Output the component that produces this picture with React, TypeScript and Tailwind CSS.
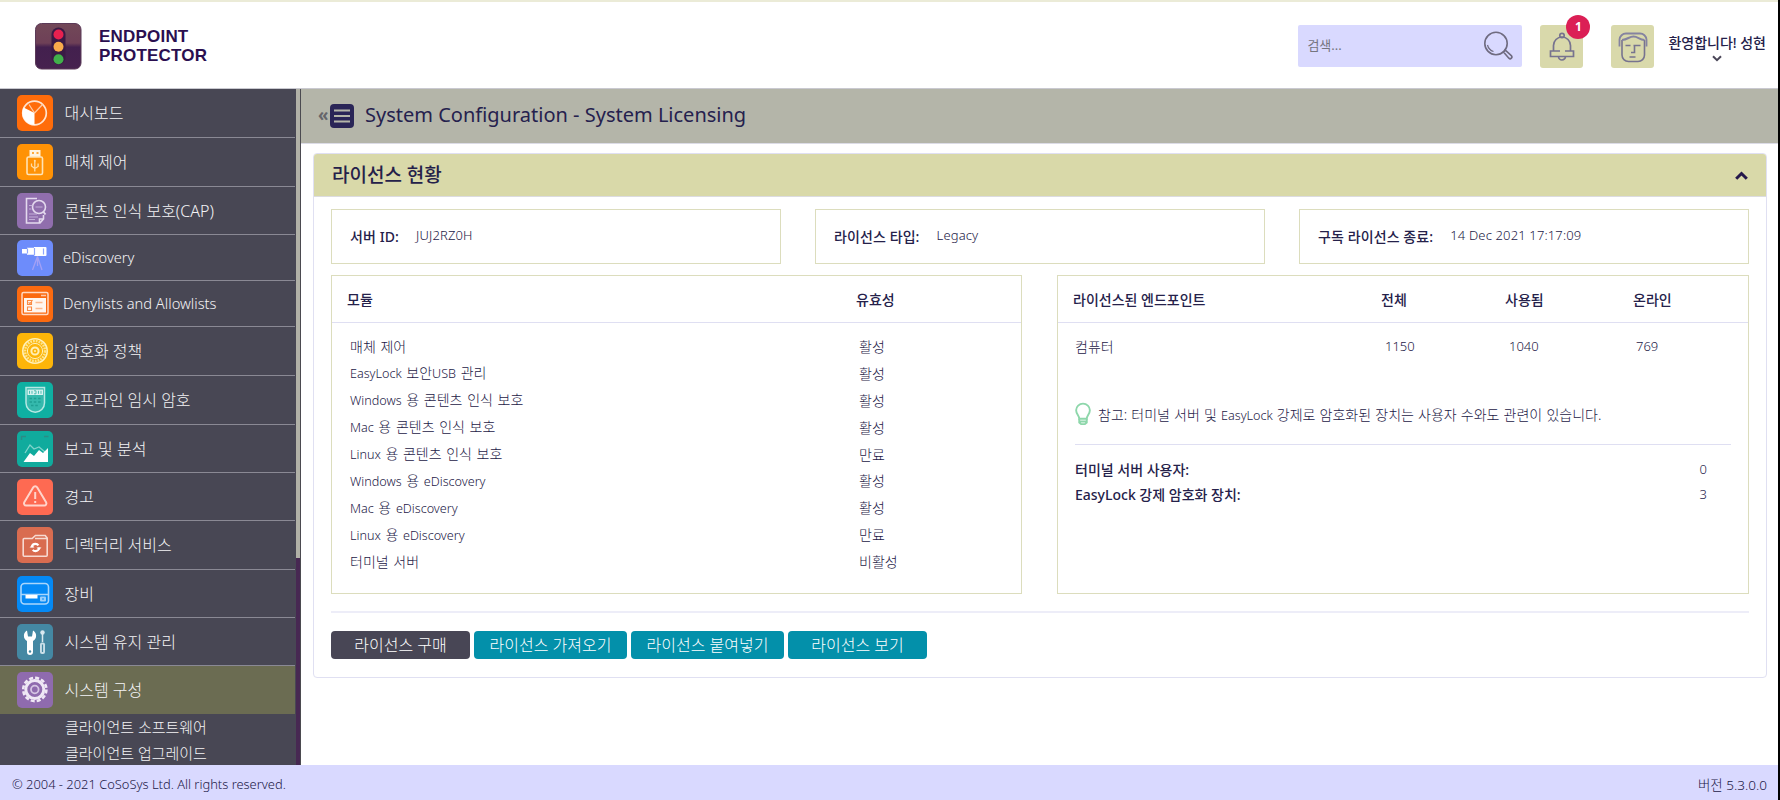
import { type ReactNode } from "react";

type Item = { label: string; h: string; tile: string; text?: string; active?: boolean; icon: ReactNode };

const items: Item[] = [
  {
    label: "대시보드", h: "h-[49px]", tile: "bg-[#ff6c0a]",
    icon: (
      <>
        <circle cx="17.5" cy="18" r="11.8" stroke="#ffe3cf" strokeWidth="1.7" />
        <path d="M17.5 18 12 9.5M17.5 18l8-8.500" stroke="#ffc9a3" strokeWidth="1.3" />
        <path d="M17.500 18v12A12 12 0 0 1 6.600 12.600z" fill="#fff" />
      </>
    ),
  },
  {
    label: "매체 제어", h: "h-[49px]", tile: "bg-[#ff9205]",
    icon: (
      <>
        <path d="M12.500 6h11v7h-11z" fill="#fff3e0" />
        <path d="M15 9h2M19.500 9h2" stroke="#ff9205" strokeWidth="1.6" />
        <rect x="10" y="13" width="15.5" height="17.5" rx="1.5" stroke="#ffe3b5" strokeWidth="1.6" />
        <path d="M17.800 27.500v-11M14.500 19.500v2.500l3.300 2.500 3.300-2v-3" stroke="#ffdca6" strokeWidth="1.3" />
        <circle cx="17.8" cy="16.8" r="1" fill="#ffdca6" />
      </>
    ),
  },
  {
    label: "콘텐츠 인식 보호(CAP)", h: "h-[48px]", tile: "bg-[#906ead]",
    icon: (
      <>
        <path d="M20 5.500H9.500V30h13.500l3.500-4v-4M22.500 30v-4h4" stroke="#e4d9ee" strokeWidth="1.6" />
        <circle cx="22" cy="14" r="6.5" stroke="#e4d9ee" strokeWidth="1.6" />
        <path d="m26.500 19 2 2.500" stroke="#e4d9ee" strokeWidth="2" />
        <path d="M12 12.500h3.500M18.500 14h7M12 16h2.500M12 21h8M12 24h9M12 26.500h6" stroke="#c3aed9" strokeWidth="1.2" />
      </>
    ),
  },
  {
    label: "eDiscovery", h: "h-[46px]", tile: "bg-[#6d8cfb]", text: "pl-[10px] text-[14.6px]",
    icon: (
      <>
        <path d="M5 9h5V7.800h7V7h11.500a1 1 0 0 1 1 1v7a1 1 0 0 1-1 1H17v-1.200h-7V13.500H5z" fill="#fff" />
        <path d="M10.500 8.500v5M17.500 8v7.500M26.500 8.500v6" stroke="#8ea6fc" strokeWidth="1.2" />
        <path d="m20.500 16.500-5 13.500M20.500 16.500l4.500 13.500M20.500 17v9" stroke="#a3a0f5" strokeWidth="1.3" />
      </>
    ),
  },
  {
    label: "Denylists and Allowlists", h: "h-[46px]", tile: "bg-[#fb6a10]", text: "pl-[10px] text-[14.7px]",
    icon: (
      <>
        <rect x="5" y="6.5" width="26" height="22" rx="1.5" stroke="#ffd9c2" strokeWidth="1.5" />
        <path d="M24 9.500h5" stroke="#ffc7a6" strokeWidth="1.3" />
        <path d="M7 12h22v14.500H7z" fill="#fff6ef" />
        <path d="M10.500 14.500h4v4h-4zM10.500 21h4v3.500h-4zM11.500 16.500l1.500 1 2.500-3.500" stroke="#fb8a44" strokeWidth="1.1" />
        <path d="M18.500 16.500h7M18.500 22.500h7" stroke="#fdb98f" strokeWidth="1.5" />
      </>
    ),
  },
  {
    label: "암호화 정책", h: "h-[49px]", tile: "bg-[#fdb509]",
    icon: (
      <>
        <circle cx="18" cy="18" r="12.2" stroke="#fff0b8" strokeWidth="1.6" />
        <circle cx="18" cy="18" r="10" stroke="#ffe489" strokeWidth="2.6" strokeDasharray="1.8 1" />
        <circle cx="18" cy="18" r="7.6" stroke="#ffefb5" strokeWidth="1" />
        <circle cx="18" cy="18" r="3.6" stroke="#fff0b8" strokeWidth="2" />
        <circle cx="18" cy="18" r="1" fill="#fff0b8" />
      </>
    ),
  },
  {
    label: "오프라인 임시 암호", h: "h-[49px]", tile: "bg-[#0fb0a2]",
    icon: (
      <>
        <path d="M9 5.500h18.500v15.500a9.250 9.250 0 0 1-18.500 0z" fill="#35b9ad" stroke="#b5e8e3" strokeWidth="1.5" />
        <path d="M10.500 7.500h15.500v5.500H10.500z" fill="#d5f3f0" />
        <path d="M12.500 8.800v3M15 8.800v3M17 8.800h2v3h-2M21.500 8.800v3M24 8.800v3" stroke="#4fbdb3" strokeWidth="1" />
        <path d="M12.500 16.500h11.500M12.500 20h11.500M14 23.500h8.500" stroke="#1f9f93" strokeWidth="1.4" strokeDasharray="2.5 1.8" />
      </>
    ),
  },
  {
    label: "보고 및 분석", h: "h-[48px]", tile: "bg-[#10ab9d]",
    icon: (
      <>
        <path d="m8 22 5-8 4 4 5-2 6 5" stroke="#7fd4cb" strokeWidth="1.3" />
        <path d="m6.500 31 6.500-9 4 3 5-6 4 3 5-5v14z" fill="#fff" />
        <path d="M4.500 9V5.500H9M27 5.500h4.500" stroke="#2a8c86" strokeWidth="1.4" />
      </>
    ),
  },
  {
    label: "경고", h: "h-[48px]", tile: "bg-[#fe6a52]",
    icon: (
      <>
        <path d="M16.300 8.300a2.200 2.200 0 0 1 3.800 0l9 15a2.100 2.100 0 0 1-1.900 3.200h-18a2.100 2.100 0 0 1-1.900-3.200z" stroke="#ffd4cb" strokeWidth="2" />
        <path d="M18.200 13v7M18.200 22v2" stroke="#ffd4cb" strokeWidth="2" />
      </>
    ),
  },
  {
    label: "디렉터리 서비스", h: "h-[49px]", tile: "bg-[#d96c50]",
    icon: (
      <>
        <path d="M6.200 12.500a1 1 0 0 1 1-1h8l3.200-3h9.800l2 2.500v17.200a1 1 0 0 1-1 1h-22a1 1 0 0 1-1-1zM18 11.500h12" stroke="#f7dad2" strokeWidth="1.6" />
        <circle cx="18.5" cy="20.5" r="3.6" stroke="#fff" strokeWidth="2.2" strokeDasharray="8.5 2.8" />
        <path d="m12.500 20.500 2.500-2.500 2.500 2.500zM19.500 20.500h5l-2.500 2.500z" fill="#fff" />
      </>
    ),
  },
  {
    label: "장비", h: "h-[48px]", tile: "bg-[#0489f5]",
    icon: (
      <>
        <rect x="4" y="7.5" width="27.5" height="20.5" rx="3.5" stroke="#a9d6fc" strokeWidth="1.6" />
        <path d="M4 18.500h27.500" stroke="#a9d6fc" strokeWidth="1.3" />
        <path d="M8.500 19h12v3.500h-12z" fill="#fff" />
        <rect x="23" y="20.5" width="6" height="5" rx="1" fill="#9bcffb" />
        <path d="M25 23h2" stroke="#0489f5" strokeWidth="1.2" />
      </>
    ),
  },
  {
    label: "시스템 유지 관리", h: "h-[48px]", tile: "bg-[#4488a3]",
    icon: (
      <>
        <path d="M10 6.500 11 12.500h4l1-6a6 6 0 0 1 0 10.500v11a3 3 0 0 1-6 0V17a6 6 0 0 1 0-10.500z" fill="#fff" />
        <circle cx="13" cy="27.5" r="1.2" fill="#4488a3" />
        <path d="M25.500 7v11" stroke="#d9e9f0" strokeWidth="1.5" />
        <circle cx="25.5" cy="8.5" r="2.2" fill="#d9e9f0" />
        <rect x="23" y="18.5" width="5" height="11.5" rx="2" fill="#c9dfe8" />
        <path d="M25.500 20.500v7.500" stroke="#4488a3" strokeWidth="1.2" />
      </>
    ),
  },
  {
    label: "시스템 구성", h: "h-[48px]", tile: "bg-[#8f6bae]", active: true,
    icon: (
      <>
        <circle cx="17.8" cy="17.5" r="9" stroke="#efe8f5" strokeWidth="3" />
        <circle cx="17.8" cy="17.5" r="11.6" stroke="#efe8f5" strokeWidth="2.6" strokeDasharray="4 2.07" />
        <circle cx="17.8" cy="17.5" r="3.8" stroke="#d5c5e3" strokeWidth="1.8" />
      </>
    ),
  },
];

const modules = [
  ["매체 제어", "활성"],
  ["EasyLock 보안USB 관리", "활성"],
  ["Windows 용 콘텐츠 인식 보호", "활성"],
  ["Mac 용 콘텐츠 인식 보호", "활성"],
  ["Linux 용 콘텐츠 인식 보호", "만료"],
  ["Windows 용 eDiscovery", "활성"],
  ["Mac 용 eDiscovery", "활성"],
  ["Linux 용 eDiscovery", "만료"],
  ["터미널 서버", "비활성"],
];

/* Sets Latin words slightly smaller than the Hangul around them. */
function Mixed({ children }: { children: string }) {
  return (
    <span className="whitespace-pre">
      {children.split(/([A-Za-z]+)/).map((part, i) =>
        i % 2 ? <span key={i} className="text-[12.6px]">{part}</span> : part,
      )}
    </span>
  );
}

function Header() {
  return (
    <header className="flex h-[89px] shrink-0 items-start border-t-2 border-b border-t-[#ebebd7] border-b-[#c9c9d0] bg-white">
      <svg className="mt-[21px] ml-[35px] size-[47px]" viewBox="0 0 47 47" fill="none">
        <defs>
          <linearGradient id="logo" x1="0" y1="0" x2="0" y2="1">
            <stop offset="0" stopColor="#724858" />
            <stop offset=".43" stopColor="#6e4057" />
            <stop offset=".52" stopColor="#43204e" />
            <stop offset="1" stopColor="#46224f" />
          </linearGradient>
        </defs>
        <rect x=".5" y=".5" width="45.5" height="45.5" rx="6" fill="url(#logo)" stroke="#5b3a58" />
        <rect x="16.5" y="4.5" width="14" height="37" rx="7" fill="#3a1a45" />
        <circle cx="23.5" cy="11.5" r="5" fill="#e8214f" />
        <circle cx="23.5" cy="23.7" r="5" fill="#f9ab4b" />
        <circle cx="23.5" cy="36.3" r="5" fill="#41b04b" />
      </svg>
      <div className="mt-[25px] ml-[17px] font-['Liberation_Sans',sans-serif] text-[17px] leading-[19px] font-bold tracking-[0.2px] text-[#2b0f50]">
        <div>ENDPOINT</div>
        <div>PROTECTOR</div>
      </div>
      <div className="ml-auto flex items-start pt-[23px] pr-[12px]">
        <div className="flex h-[42px] w-[224px] items-center justify-between rounded-[2px] bg-[#d9d9ff] pr-[9px] pl-[9px]">
          <span className="text-[13px] text-[#75757f]">검색...</span>
          <svg className="size-[30px]" viewBox="0 0 30 30" fill="none" stroke="#6f6b80" strokeWidth="1.6">
            <circle cx="13" cy="12.5" r="11.2" />
            <path d="M4.500 14a9 9 0 0 0 6 6.500" strokeWidth="1.2" />
            <path d="m20.500 21 1.800-1.800 6 5.500a1.700 1.700 0 0 1-2.400 2.500z" />
          </svg>
        </div>
        <div className="relative ml-[18px] flex size-[43px] items-center justify-center rounded-[3px] bg-[#d9d9ab]">
          <svg className="size-[30px]" viewBox="0 0 30 30" fill="none" stroke="#77738f" strokeWidth="1.7">
            <circle cx="15" cy="3.5" r="2.2" />
            <path d="M6.500 19V13.500a8.500 8.500 0 0 1 17 0V19" />
            <path d="M13 19H3.500v5.500h23V19H18M11.500 24.500a3.500 3.500 0 0 0 7 0" />
          </svg>
          <span className="absolute -top-[10px] -right-[7px] flex size-[24px] items-center justify-center rounded-full bg-[#db1f55] text-[12px] font-bold text-white">1</span>
        </div>
        <div className="ml-[28px] flex size-[43px] items-center justify-center rounded-[3px] bg-[#d9d9ab]">
          <svg className="size-[32px]" viewBox="0 0 32 32" fill="none" stroke="#77738f" strokeWidth="1.6">
            <path d="M5 9v15a6.500 6.500 0 0 0 6.500 6.500h9.500a6.500 6.500 0 0 0 6.500-6.500V9" />
            <path d="M2.500 15.500V8.500a6.500 6.500 0 0 1 6.500-6h14a6.500 6.500 0 0 1 6.500 6v7" stroke="#8583a0" strokeWidth="1.8" />
            <path d="M5 9c6-.5 7-3.500 11.500-3.500S22 8.500 27.500 9" stroke="#8583a0" strokeWidth="2" />
            <path d="M8.500 14.500h5M16.500 14.500h7M17.500 14.500v7H14M12.500 26h6" />
          </svg>
        </div>
        <div className="ml-[14px] flex flex-col items-center">
          <span className="mt-[8px] text-[14px] leading-[20px] font-medium whitespace-nowrap text-[#25214a]">환영합니다! 성현</span>
          <svg className="mt-[2px] h-[7px] w-[10px]" viewBox="0 0 10 7" fill="none" stroke="#4a4658" strokeWidth="2"><path d="m1 1.200 4 4 4-4" /></svg>
        </div>
      </div>
    </header>
  );
}

function Sidebar() {
  return (
    <nav className="flex w-[301px] shrink-0 overflow-hidden border-r border-[#4b4a50] bg-[#484754] font-light">
      <div className="w-[295px] shrink-0">
        {items.map((it) => (
          <div key={it.label} className={`flex items-center pl-[17px] text-[16px] text-[#f4f4f6] ${it.h} ${it.active ? "bg-[#6b6c52]" : "border-b border-[#8a8994]"}`}>
            <svg className={`size-[36px] rounded-[5px] ${it.tile}`} viewBox="0 0 36 36" fill="none">{it.icon}</svg>
            <span className={it.text ?? "pl-[11.500px]"}>{it.label}</span>
          </div>
        ))}
        <div className="pl-[65px] text-[15px] leading-[26px] text-[#f4f4f6]">
          <div>클라이언트 소프트웨어</div>
          <div>클라이언트 업그레이드</div>
        </div>
      </div>
      <div className="flex-1 border-l border-[#484754] bg-[#472852]">
        <div className="h-[469px] bg-[#b1b1a7]" />
      </div>
    </nav>
  );
}

function Info({ label, value }: { label: string; value: string }) {
  return (
    <div className="flex h-[55px] w-[450px] items-center border border-[#dcddbd] pb-px pl-[18px] text-[14px] whitespace-nowrap">
      <span className="font-medium tracking-[0.1px]">{label}</span>
      <span className="ml-[17px] text-[13px] font-light tracking-[0.15px] text-[#1c1846]">{value}</span>
    </div>
  );
}

function Button({ children, cls }: { children: string; cls: string }) {
  return <button className={`flex h-[28px] items-center justify-center rounded-[4px] text-[16px] font-light text-white ${cls}`}>{children}</button>;
}

export default function App() {
  return (
    <div className="flex h-[800px] w-[1780px] flex-col overflow-hidden border-r-2 border-black bg-white font-['Noto_Sans','Noto_Sans_CJK_KR',sans-serif] text-[#25214a]">
      <Header />
      <div className="flex h-[676px] shrink-0">
        <Sidebar />
        <main className="min-w-0 flex-1">
          <div className="flex h-[55px] items-center border-b border-[#dcdce6] bg-[#b4b5a9] pl-[17px]">
            <span className="w-[12px] pb-[3px] text-[17px] leading-none font-bold text-[#66656a]">«</span>
            <svg className="size-[24px]" viewBox="0 0 24 24">
              <rect width="24" height="24" rx="4" fill="#2a2557" />
              <path d="M4 6.500h16M4 12h16M4 17.500h16" stroke="#b4b5a9" strokeWidth="2" />
            </svg>
            <h1 className="ml-[11px] pb-[2px] text-[20px] text-[#25214e]">System Configuration - System Licensing</h1>
          </div>
          <section className="mt-[9px] ml-[12px] h-[525px] w-[1454px] rounded-[4px] border border-[#e0e0f2]">
            <div className="flex h-[43px] items-center justify-between rounded-t-[3px] border-b border-[#dcdce0] bg-[#d9d9a9] pr-[18px] pl-[18px]">
              <h2 className="text-[19px] font-medium">라이선스 현황</h2>
              <svg className="h-[9px] w-[13px]" viewBox="0 0 13 9" fill="none" stroke="#25184a" strokeWidth="3"><path d="M1.200 7.800 6.500 2.500l5.300 5.300" /></svg>
            </div>
            <div className="mx-[17px] mt-[12px] flex justify-between">
              <Info label="서버 ID:" value="JUJ2RZ0H" />
              <Info label="라이선스 타입:" value="Legacy" />
              <Info label="구독 라이선스 종료:" value="14 Dec 2021 17:17:09" />
            </div>
            <div className="mx-[17px] mt-[11px] flex justify-between text-[14px]">
              <div className="h-[319px] w-[691px] border border-[#dcddbd]">
                <div className="flex h-[47px] items-center border-b border-[#dfdff2] pl-[15px] font-medium">
                  <span className="w-[509px]">모듈</span>
                  <span>유효성</span>
                </div>
                <div className="pt-[10px] pl-[18px] font-light text-[#1c1846] [word-spacing:1px]">
                  {modules.map(([name, state]) => (
                    <div key={name} className="flex h-[26.9px] items-center">
                      <span className="w-[509px]"><Mixed>{name}</Mixed></span>
                      <span>{state}</span>
                    </div>
                  ))}
                </div>
              </div>
              <div className="h-[319px] w-[692px] border border-[#dcddbd]">
                <div className="flex h-[47px] items-center border-b border-[#dfdff2] pl-[15px] font-medium">
                  <span className="w-[308px]">라이선스된 엔드포인트</span>
                  <span className="w-[124px]">전체</span>
                  <span className="w-[128px]">사용됨</span>
                  <span>온라인</span>
                </div>
                <div className="mt-[10px] flex h-[27px] items-center pl-[17px] font-light text-[#1c1846]">
                  <span className="w-[310px]">컴퓨터</span>
                  <span className="w-[124px] text-[13px]">1150</span>
                  <span className="w-[127px] text-[13px]">1040</span>
                  <span className="text-[13px]">769</span>
                </div>
                <div className="mx-[17px] mt-[35px] flex h-[50px] items-center border-b border-[#dfdff2] pb-[9px] font-light text-[#1c1846]">
                  <svg className="mb-[2px] h-[24px] w-[16px]" viewBox="0 0 17 24" fill="none" stroke="#8ed7ab" strokeWidth="2">
                    <path d="M4.500 17c0-3-3.300-5-3.300-9a7.300 7 0 0 1 14.600 0c0 4-3.300 6-3.300 9z" />
                    <path d="M4.500 17v4l2 1.800h4l2-1.800v-4M4.500 20h8" />
                  </svg>
                  <span className="ml-[7px] [word-spacing:0.5px]"><Mixed>참고: 터미널 서버 및 EasyLock 강제로 암호화된 장치는 사용자 수와도 관련이 있습니다.</Mixed></span>
                </div>
                <div className="pt-[12px] pr-[41px] pl-[17px]">
                  <div className="flex h-[25px] items-center justify-between">
                    <span className="font-medium">터미널 서버 사용자:</span><span className="text-[13px] font-light">0</span>
                  </div>
                  <div className="flex h-[25px] items-center justify-between">
                    <span className="font-medium">EasyLock 강제 암호화 장치:</span><span className="text-[13px] font-light">3</span>
                  </div>
                </div>
              </div>
            </div>
            <div className="mx-[17px] mt-[17px] border-t-2 border-[#ededf8]" />
            <div className="mt-[18px] ml-[17px] flex gap-[4px]">
              <Button cls="w-[139px] bg-[#484655]">라이선스 구매</Button>
              <Button cls="w-[153px] bg-[#0390aa]">라이선스 가져오기</Button>
              <Button cls="w-[153px] bg-[#0390aa]">라이선스 붙여넣기</Button>
              <Button cls="w-[139px] bg-[#0390aa]">라이선스 보기</Button>
            </div>
          </section>
        </main>
      </div>
      <footer className="flex h-[35px] shrink-0 items-center justify-between bg-[#d9d9ff] pt-[5px] pr-[11px] pl-[12px] text-[13.5px] font-light text-[#1c1846]">
        <span className="text-[12.9px]">© 2004 - 2021 CoSoSys Ltd. All rights reserved.</span>
        <span>버전 5.3.0.0</span>
      </footer>
    </div>
  );
}
